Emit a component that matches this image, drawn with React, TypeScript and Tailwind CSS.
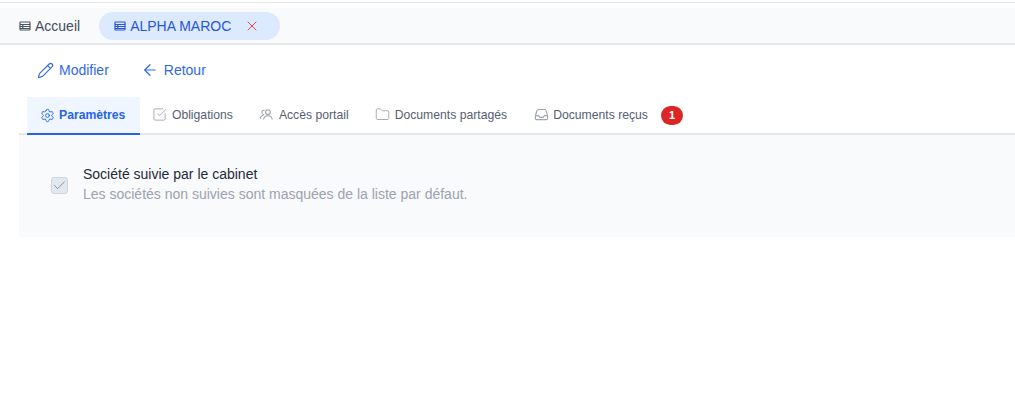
import { ArrowLeft, Check, Folder, Pencil, Settings, SquareCheckBig, X } from 'lucide-react'

function TableIcon({ className }: { className?: string }) {
  return (
    <svg viewBox="0 0 12 12" className={className} fill="none" stroke="currentColor" strokeWidth="1.2">
      <rect x="1" y="2" width="10" height="8" rx="0.8" />
      <path d="M1 4.5h10M1 6.5h10M1 8.5h10M3.8 4.5v4" />
    </svg>
  )
}

function PeopleIcon({ className }: { className?: string }) {
  return (
    <svg viewBox="0 0 16 16" className={className} fill="none" stroke="currentColor" strokeWidth="1.1" strokeLinecap="round">
      <circle cx="9.5" cy="5.5" r="2.5" />
      <path d="M5 13c.3-2.4 2.2-3.6 4.5-3.6S13.7 10.6 14 13" />
      <path d="M5.6 3.4A2.3 2.3 0 0 0 5.2 8M1.5 12c.2-1.8 1.2-3 2.9-3.3" />
    </svg>
  )
}

function InboxOpenIcon({ className }: { className?: string }) {
  return (
    <svg viewBox="0 0 16 16" className={className} fill="none" stroke="currentColor" strokeWidth="1.2" strokeLinejoin="round">
      <path d="M1.5 9.2V12a1.5 1.5 0 0 0 1.5 1.5h10a1.5 1.5 0 0 0 1.5-1.5V9.2" />
      <path d="M1.5 9.2 3.2 3.8A1.5 1.5 0 0 1 4.6 2.7h6.8a1.5 1.5 0 0 1 1.4 1.1l1.7 5.4" />
      <path d="M1.5 9.2h3.3L6.2 11h3.6l1.4-1.8h3.3" />
    </svg>
  )
}

const tabs = [
  { label: 'Obligations', icon: SquareCheckBig },
  { label: 'Accès portail', icon: PeopleIcon },
  { label: 'Documents partagés', icon: Folder },
  { label: 'Documents reçus', icon: InboxOpenIcon },
]

export default function App() {
  return (
    <div className="h-[418px] w-[1015px] overflow-hidden bg-white font-['Liberation_Sans',Arial,sans-serif]">
      <div className="pt-[2px]">
        <div className="h-[1px] bg-[#e5e7eb]" />
      </div>

      {/* Onglets du haut */}
      <div className="mt-[5px] flex h-[37px] items-center gap-[11px] border-b-2 border-[#e5e7eb] bg-[#f9fafb] pl-[11px]">
        <div className="flex h-[28px] items-center gap-[4px] px-2 text-sm text-[#434c5a]">
          <TableIcon className="h-[12px] w-[12px] text-[#4b5563]" />
          Accueil
        </div>
        <div className="flex h-[28px] w-[181px] items-center rounded-full bg-[#dbeafe] pl-[15px] text-sm text-[#2a55d9]">
          <TableIcon className="h-[12px] w-[12px]" />
          <span className="ml-[4px]">ALPHA MAROC</span>
          <X className="ml-[13px] h-[16px] w-[16px] text-[#ef4444]" strokeWidth={1.5} />
        </div>
      </div>

      {/* Actions */}
      <div className="-mt-[1px] flex h-[52px] items-center gap-[32px] pl-[37px] text-sm text-[#3068ea]">
        <div className="flex items-center gap-[5px]">
          <Pencil className="h-[17px] w-[17px]" strokeWidth={1.6} />
          Modifier
        </div>
        <div className="flex items-center gap-[5px]">
          <ArrowLeft className="h-[18px] w-[18px]" strokeWidth={1.6} />
          Retour
        </div>
      </div>

      {/* Onglets */}
      <div className="mt-[1px] ml-[19px] flex h-[38px] items-center border-b-2 border-[#e5e7eb] pl-[8px] text-[12.2px] text-[#556070]">
        <div className="-mb-[2px] flex h-[38px] items-center gap-[4px] border-b-2 border-[#2563eb] bg-[#eff6ff] pl-[13px] pr-[14.5px] font-bold text-[#2563eb]">
          <Settings className="h-[15px] w-[15px]" strokeWidth={1.5} />
          Paramètres
        </div>
        <div className="-ml-[0.75px] flex items-center">
          {tabs.map((tab) => (
            <div key={tab.label} className="flex items-center gap-[4.5px] px-[13.25px]">
              <tab.icon className="h-[15px] w-[15px] text-[#9ca3af]" strokeWidth={1.4} />
              {tab.label}
            </div>
          ))}
        </div>
        <span className="ml-[-0.25px] flex h-[19px] w-[22px] items-center justify-center rounded-full bg-[#dc2626] text-[11px] font-bold text-white">
          1
        </span>
      </div>

      {/* Contenu */}
      <div className="ml-[19px] flex h-[102px] items-start bg-[#f9fafb] pl-[32px] pt-[29px]">
        <div className="mt-[13px] flex h-[17px] w-[17px] items-center justify-center rounded-[3px] border border-[#d1d5db] bg-[#e2e8f0]">
          <Check className="h-[15px] w-[15px] text-[#6b7280]" strokeWidth={1.2} />
        </div>
        <div className="ml-[15px] text-sm leading-[20px]">
          <div className="text-[#1f2937]">Société suivie par le cabinet</div>
          <div className="text-[#9ca3af]">Les sociétés non suivies sont masquées de la liste par défaut.</div>
        </div>
      </div>
    </div>
  )
}
